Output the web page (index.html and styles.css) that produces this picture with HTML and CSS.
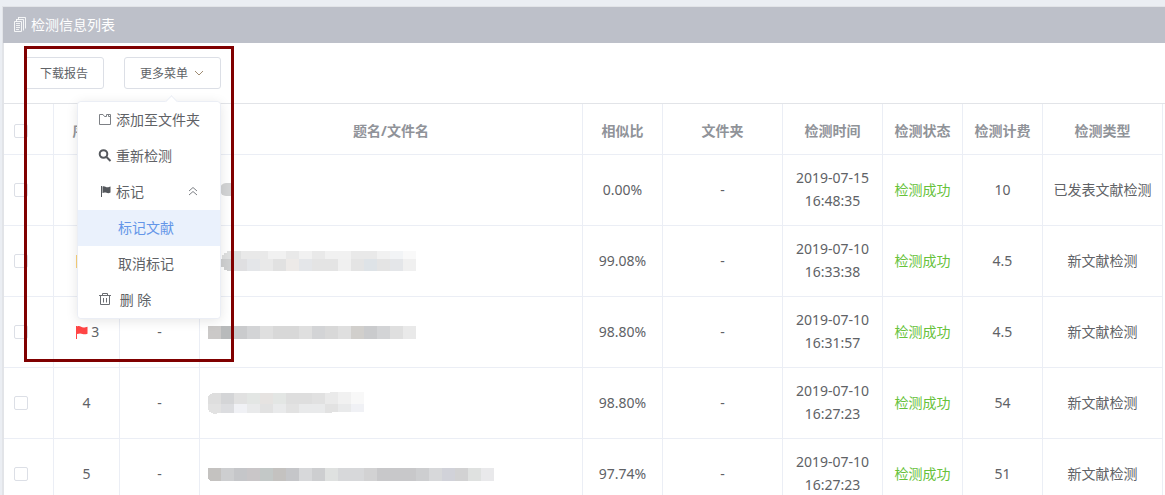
FILE: index.html
```html
<!DOCTYPE html>
<html lang="zh-CN">
<head>
    <meta charset="UTF-8">
    <meta name="viewport" content="width=device-width, initial-scale=1.0">
    <title>检测信息列表</title>
    <link rel="stylesheet" href="styles.css">
</head>
<body>
    <div class="panel">
        <div class="panel-header">
            <svg class="title-icon" width="14" height="16" viewBox="0 0 14 16" fill="none" stroke="#fff">
                <path d="M5 1.500h7.500v11M3 3.500h7.500v11M1.500 5.500h7v10h-7zM3.500 5.500v-2M5.500 3.500v-2" opacity=".85"/>
                <path d="M3 7.500h4M3 9.500h4M3 11.500h4M3 13.500h3" opacity=".8"/>
            </svg>
            <span>检测信息列表</span>
        </div>

        <div class="toolbar">
            <button type="button" class="btn">下载报告</button>
            <div class="dropdown">
                <button type="button" class="btn">更多菜单
                    <svg width="12" height="12" viewBox="0 0 12 12" fill="none" stroke="#a08c72"><path d="M2 4l4 4 4-4"/></svg>
                </button>
                <ul class="menu">
                    <li><button type="button" class="menu-item">
                        <svg width="14" height="14" viewBox="0 0 14 14" fill="none" stroke="#7d8085"><path d="M1.500 2.500h3.500l1.500 2h2v-2h4v10h-11zM10.500 2.500v2h2"/></svg>
                        <span>添加至文件夹</span>
                    </button></li>
                    <li><button type="button" class="menu-item">
                        <svg width="14" height="14" viewBox="0 0 14 14" fill="none" stroke="#55585d" stroke-width="2"><circle cx="5.500" cy="6" r="3.800"/><path d="M8.500 9l4 4"/></svg>
                        <span>重新检测</span>
                    </button></li>
                    <li><button type="button" class="menu-item">
                        <svg width="14" height="14" viewBox="0 0 14 14" fill="#55585d"><path d="M3 2h1v11H3zM4.500 2.500c2-1 3.500 1 5 .8 1.200 0 1.800-.4 3-.8v6c-1.500.8-2.500.9-4 .3-1.500-.6-2.500-.5-4 .2z"/></svg>
                        <span>标记</span>
                        <svg class="fold" width="12" height="12" viewBox="0 0 12 12" fill="none" stroke="#7d8085"><path d="M2 6l4-3.500L10 6M2 10l4-3.500L10 10"/></svg>
                    </button></li>
                    <li><button type="button" class="menu-item sub active">标记文献</button></li>
                    <li><button type="button" class="menu-item sub">取消标记</button></li>
                    <li><button type="button" class="menu-item">
                        <svg width="14" height="14" viewBox="0 0 14 14" fill="none" stroke="#6b6e73"><path d="M1 3.500h12M4.500 3V1.500h5V3M2.500 3.500v9h9v-9M5.500 6v4.500M8.500 6v4.500"/></svg>
                        <span>&nbsp;删 除</span>
                    </button></li>
                </ul>
            </div>
        </div>

        <div class="table-wrap">
            <table>
                <colgroup>
                    <col class="w-check"><col class="w-index"><col class="w-small"><col>
                    <col class="w-small"><col class="w-folder"><col class="w-time">
                    <col class="w-small"><col class="w-small"><col class="w-folder">
                </colgroup>
                <thead>
                    <tr>
                        <th class="check"><input type="checkbox" aria-label="全选"></th>
                        <th>序号</th>
                        <th></th>
                        <th>题名/文件名</th>
                        <th>相似比</th>
                        <th>文件夹</th>
                        <th>检测时间</th>
                        <th>检测状态</th>
                        <th>检测计费</th>
                        <th>检测类型</th>
                    </tr>
                </thead>
                <tbody>
                    <tr>
                        <td class="check"><input type="checkbox" aria-label="1"></td>
                        <td>1</td>
                        <td></td>
                        <td class="name"><svg width="24" height="14" viewBox="0 0 24 14"><rect width="34" height="13" rx="6" x="12" fill="#d3d4d5"/></svg></td>
                        <td>0.00%</td>
                        <td>-</td>
                        <td>2019-07-15 16:48:35</td>
                        <td class="success">检测成功</td>
                        <td>10</td>
                        <td>已发表文献检测</td>
                    </tr>
                    <tr>
                        <td class="check"><input type="checkbox" aria-label="2"></td>
                        <td><svg class="flag" width="12" height="14" viewBox="1 0 12 14" fill="#fbd27a"><path d="M1 1h1v13H1zM2 1.500c3-1.500 4 1 6.500 1 1.500 0 2.500-.5 4-.8v7c-2 .9-3.500.8-5 .2S4.500 8.200 2 9z"/></svg> 2</td>
                        <td></td>
                        <td class="name">
                            <svg width="208" height="20" viewBox="0 0 208 20" shape-rendering="crispEdges">
                                <path fill="#dfe0e0" d="M19 0h14v8H14v-4h2v-2h3z"/>
                                <path fill="#cfd0d1" d="M13 8h20v12H19v-1h-3v-3h-3z"/>
                                <path fill="#e9e9e9" d="M33 0h27v8H33zM78 0h13v8H78zM104 0h13v8h-13zM143 0h26v8h-26z"/>
                                <path fill="#f1f1f1" d="M60 0h18v8H60zM91 0h13v8H91zM117 0h26v8h-26zM169 0h13v8h-13z"/>
                                <path fill="#f2f4f6" d="M182 0h13v8h-13z"/>
                                <path fill="#f9f9f9" d="M195 0h13v8h-13z"/>
                                <path fill="#dfdfe1" d="M26 8h13v12H26z"/>
                                <path fill="#e4e6e9" d="M39 8h13v12H39zM91 8h13v12H91zM182 8h13v12h-13z"/>
                                <path fill="#e9e9e9" d="M52 8h13v12H52z"/>
                                <path fill="#e1e1e1" d="M65 8h13v12H65z"/>
                                <path fill="#edeae8" d="M78 8h13v12H78z"/>
                                <path fill="#e4e4e4" d="M104 8h26v12h-26zM143 8h13v12h-13zM169 8h13v12h-13z"/>
                                <path fill="#f0f0f0" d="M130 8h13v12h-13zM195 8h13v12h-13z"/>
                                <path fill="#dee3e7" d="M156 8h13v12h-13z"/>
                            </svg>
                        </td>
                        <td>99.08%</td>
                        <td>-</td>
                        <td>2019-07-10 16:33:38</td>
                        <td class="success">检测成功</td>
                        <td>4.5</td>
                        <td>新文献检测</td>
                    </tr>
                    <tr>
                        <td class="check"><input type="checkbox" aria-label="3"></td>
                        <td><svg class="flag" width="12" height="14" viewBox="1 0 12 14" fill="#ff4545"><path d="M1 1h1v13H1zM2 1.500c3-1.500 4 1 6.500 1 1.500 0 2.500-.5 4-.8v7c-2 .9-3.500.8-5 .2S4.500 8.200 2 9z"/></svg> 3</td>
                        <td>-</td>
                        <td class="name">
                            <svg width="208" height="13" viewBox="0 0 208 13" shape-rendering="crispEdges">
                                <path fill="#cbc9c8" d="M0 0h13v13H0z"/>
                                <path fill="#b8babb" d="M13 0h13v13H13z"/>
                                <path fill="#cacbcd" d="M26 0h13v13H26zM156 0h13v13h-13z"/>
                                <path fill="#d3d4d6" d="M39 0h13v13H39zM104 0h13v13h-13zM169 0h13v13h-13z"/>
                                <path fill="#dfdfdf" d="M52 0h13v13H52zM91 0h13v13H91zM130 0h13v13h-13zM182 0h13v13h-13z"/>
                                <path fill="#d8d8d8" d="M65 0h26v13H65zM117 0h13v13h-13z"/>
                                <path fill="#d1cfcc" d="M143 0h13v13h-13z"/>
                                <path fill="#e9e9e9" d="M195 0h13v13h-13z"/>
                            </svg>
                        </td>
                        <td>98.80%</td>
                        <td>-</td>
                        <td>2019-07-10 16:31:57</td>
                        <td class="success">检测成功</td>
                        <td>4.5</td>
                        <td>新文献检测</td>
                    </tr>
                    <tr>
                        <td class="check"><input type="checkbox" aria-label="4"></td>
                        <td>4</td>
                        <td>-</td>
                        <td class="name">
                            <svg width="156" height="22" viewBox="0 0 156 22" shape-rendering="crispEdges">
                                <path fill="#dedede" d="M4 1h9v11H0V4h1V3h1V2h2zM78 1h26v11H78z"/>
                                <path fill="#d4d5d7" d="M13 1h13v11H13z"/>
                                <path fill="#e1e1e1" d="M26 1h13v11H26zM104 1h13v11h-13z"/>
                                <path fill="#e3e6e4" d="M39 1h13v11H39zM65 1h13v11H65z"/>
                                <path fill="#e6e3e1" d="M52 1h13v11H52z"/>
                                <path fill="#eaeaea" d="M117 1h5V0h8v12h-13z"/>
                                <path fill="#f1f1f1" d="M130 0h13v12h-13z"/>
                                <path fill="#f8f8f8" d="M143 0h13v12h-13z"/>
                                <path fill="#e2e2e2" d="M0 12h13v9H9v1H5v-1H3v-1H1v-2H0zM52 12h13v9H52zM78 12h13v9H78zM117 12h13v8h-6v1h-7z"/>
                                <path fill="#dcdde0" d="M13 12h13v9H13z"/>
                                <path fill="#f0f1f5" d="M26 12h13v9H26zM143 12h13v8h-13z"/>
                                <path fill="#e9eaeb" d="M39 12h13v9H39zM65 12h13v9H65zM91 12h26v9H91zM130 12h13v8h-13z"/>
                            </svg>
                        </td>
                        <td>98.80%</td>
                        <td>-</td>
                        <td>2019-07-10 16:27:23</td>
                        <td class="success">检测成功</td>
                        <td>54</td>
                        <td>新文献检测</td>
                    </tr>
                    <tr>
                        <td class="check"><input type="checkbox" aria-label="5"></td>
                        <td>5</td>
                        <td>-</td>
                        <td class="name">
                            <svg width="286" height="13" viewBox="0 0 286 13" shape-rendering="crispEdges">
                                <path fill="#c4c2c0" d="M0 0h13v13H2v-1H1v-1H0zM65 0h13v13H65z"/>
                                <path fill="#cdced0" d="M13 0h13v13H13zM104 0h13v13h-13zM208 0h13v13h-13z"/>
                                <path fill="#c5c6c9" d="M26 0h13v13H26zM78 0h13v13H78z"/>
                                <path fill="#c9c6c8" d="M39 0h13v13H39z"/>
                                <path fill="#c3c8c7" d="M52 0h13v13H52z"/>
                                <path fill="#d7d8da" d="M91 0h13v13H91zM130 0h26v13h-26zM221 0h13v13h-13z"/>
                                <path fill="#dfe1e0" d="M117 0h13v13h-13zM260 0h13v13h-13z"/>
                                <path fill="#d2d2d3" d="M156 0h13v13h-13zM247 0h13v13h-13z"/>
                                <path fill="#c8c8ca" d="M169 0h39v13h-39z"/>
                                <path fill="#d1d2d9" d="M234 0h13v13h-13z"/>
                                <path fill="#e9e9eb" d="M273 0h13v13h-13z"/>
                            </svg>
                        </td>
                        <td>97.74%</td>
                        <td>-</td>
                        <td>2019-07-10 16:27:23</td>
                        <td class="success">检测成功</td>
                        <td>51</td>
                        <td>新文献检测</td>
                    </tr>
                </tbody>
            </table>
        </div>

        <div class="highlight-box"></div>
    </div>
</body>
</html>
```
FILE: styles.css
```css
* {
    box-sizing: border-box;
    margin: 0;
    padding: 0;
}

html {
    height: 100%;
    overflow: hidden;
}

body {
    font-family: "Noto Sans", "Noto Sans CJK SC", sans-serif;
    font-size: 14px;
    line-height: 23px;
    color: #606266;
    background: #ebeef3;
    height: 100%;
    overflow: hidden;
    padding: 6px 0 0 2px;
}

button {
    font-family: inherit;
    color: inherit;
    background: #fff;
    cursor: pointer;
}

svg {
    flex: none;
}

.panel {
    position: relative;
    background: #fff;
    border-top: 1px solid #e2e4e8;
    border-left: 2px solid #e2e4e8;
}

.panel-header {
    display: flex;
    align-items: center;
    gap: 4px;
    height: 36px;
    margin-left: -1px;
    padding: 0 10px 2px;
    color: #fff;
    background: #bdc0c9;
}

.toolbar {
    display: flex;
    gap: 20px;
    padding: 14px 20px;
    border-bottom: 1px solid #e2e4e8;
}

.btn {
    display: flex;
    align-items: center;
    gap: 5px;
    height: 32px;
    padding: 0 15px;
    font-size: 12px;
    border: 1px solid #dcdfe6;
    border-radius: 3px;
}

/* 下拉菜单 */
.dropdown {
    position: relative;
}

.menu {
    position: absolute;
    top: 44px;
    right: 0;
    z-index: 10;
    width: 144px;
    list-style: none;
    background: #fff;
    border: 1px solid #ebeef5;
    border-radius: 4px;
    box-shadow: 0 2px 12px rgba(0, 0, 0, 0.1);
}

.menu::before {
    content: '';
    position: absolute;
    top: -5px;
    right: 44px;
    width: 8px;
    height: 8px;
    background: #fff;
    border-top: 1px solid #ebeef5;
    border-left: 1px solid #ebeef5;
    transform: rotate(45deg);
}

.menu-item {
    display: flex;
    align-items: center;
    gap: 4px;
    width: 100%;
    height: 36px;
    padding: 0 10px 2px 20px;
    font-size: 14px;
    white-space: nowrap;
    border: none;
    border-radius: 4px;
}

.menu-item.sub {
    padding-left: 40px;
    border-radius: 0;
}

.menu-item.active {
    color: #6496e8;
    background: #eaf1fc;
}

.fold {
    margin: 0 11px 0 auto;
}

/* 表格 */
.table-wrap {
    padding-right: 2px;
}

table {
    width: 100%;
    table-layout: fixed;
    border-collapse: separate;
    border-spacing: 0;
}

.w-check {
    width: 50px;
}

.w-index {
    width: 66px;
}

.w-small {
    width: 80px;
}

.w-folder {
    width: 120px;
}

.w-time {
    width: 100px;
}

th,
td {
    padding: 11px 8px 13px;
    text-align: center;
    vertical-align: middle;
    border-right: 1px solid #ebeef5;
    border-bottom: 1px solid #ebeef5;
}

th {
    height: 51px;
    padding: 14px 8px 12px;
    font-weight: 700;
    color: #909399;
}

td {
    height: 71px;
}

td.name {
    padding: 12px 8px;
    text-align: left;
}

.name svg {
    display: block;
}

.success {
    color: #67c23a;
}

th.check {
    padding: 15px 0 12px 10px;
}

td.check {
    padding: 12px 0 12px 10px;
}

.check input {
    display: block;
    appearance: none;
    width: 14px;
    height: 14px;
    background: #fff;
    border: 1px solid #dcdfe6;
    border-radius: 2px;
}

.flag {
    margin-left: 2px;
    vertical-align: -2px;
}

/* 红色标注框 */
.highlight-box {
    position: absolute;
    top: 39px;
    left: 20px;
    z-index: 20;
    width: 210px;
    height: 316px;
    border: 3px solid #800000;
    pointer-events: none;
}
```
